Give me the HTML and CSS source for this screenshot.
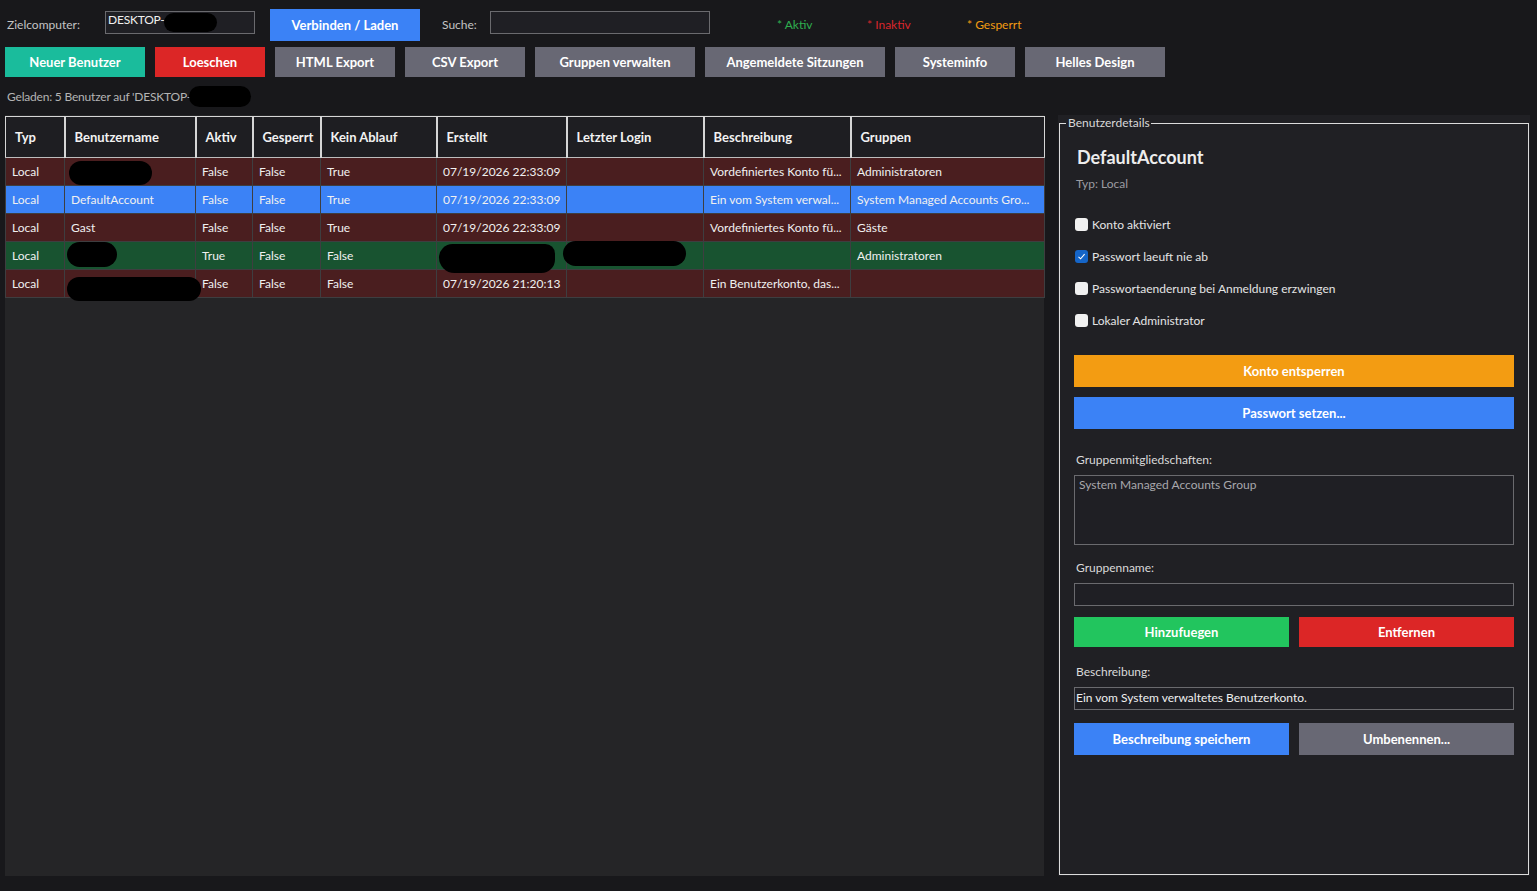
FILE: index.html
```html
<!DOCTYPE html>
<html lang="de">
<head>
<meta charset="utf-8">
<title>Benutzerverwaltung</title>
<link rel="stylesheet" href="styles.css">
</head>
<body>
<div class="topbar">
  <span class="lbl lbl-target">Zielcomputer:</span>
  <div class="textbox tb-target">DESKTOP-<span class="blob blob-target"></span></div>
  <button class="btn btn-blue btn-connect">Verbinden / Laden</button>
  <span class="lbl lbl-search">Suche:</span>
  <div class="textbox tb-search"></div>
  <span class="legend l-active">* Aktiv</span>
  <span class="legend l-inactive">* Inaktiv</span>
  <span class="legend l-locked">* Gesperrt</span>
</div>

<div class="toolbar">
  <button class="btn btn-teal w140">Neuer Benutzer</button>
  <button class="btn btn-red w110">Loeschen</button>
  <button class="btn btn-gray w120">HTML Export</button>
  <button class="btn btn-gray w120">CSV Export</button>
  <button class="btn btn-gray w160">Gruppen verwalten</button>
  <button class="btn btn-gray w180">Angemeldete Sitzungen</button>
  <button class="btn btn-gray w120">Systeminfo</button>
  <button class="btn btn-gray w140">Helles Design</button>
</div>

<div class="status">Geladen: 5 Benutzer auf 'DESKTOP-<span class="blob-inline"></span></div>

<div class="main">
  <div class="grid">
    <table class="users">
      <colgroup>
        <col class="c-typ"><col class="c-name"><col class="c-aktiv"><col class="c-gesp"><col class="c-ablauf"><col class="c-erst"><col class="c-login"><col class="c-beschr"><col class="c-grp">
      </colgroup>
      <thead>
        <tr><th>Typ</th><th>Benutzername</th><th>Aktiv</th><th>Gesperrt</th><th>Kein Ablauf</th><th>Erstellt</th><th>Letzter Login</th><th>Beschreibung</th><th>Gruppen</th></tr>
      </thead>
      <tbody>
        <tr class="r-inactive">
          <td>Local</td><td class="rel"><span class="blob b1"></span></td><td>False</td><td>False</td><td>True</td><td>07/19/2026 22:33:09</td><td></td><td>Vordefiniertes Konto fü...</td><td>Administratoren</td>
        </tr>
        <tr class="r-selected">
          <td>Local</td><td>DefaultAccount</td><td>False</td><td>False</td><td>True</td><td>07/19/2026 22:33:09</td><td></td><td>Ein vom System verwal...</td><td>System Managed Accounts Gro...</td>
        </tr>
        <tr class="r-inactive">
          <td>Local</td><td>Gast</td><td>False</td><td>False</td><td>True</td><td>07/19/2026 22:33:09</td><td></td><td>Vordefiniertes Konto fü...</td><td>Gäste</td>
        </tr>
        <tr class="r-active">
          <td>Local</td><td class="rel"><span class="blob b2"></span></td><td>True</td><td>False</td><td>False</td><td class="rel"><span class="blob b3"></span></td><td class="rel"><span class="blob b4"></span></td><td></td><td>Administratoren</td>
        </tr>
        <tr class="r-inactive">
          <td>Local</td><td class="rel"><span class="blob b5"></span></td><td>False</td><td>False</td><td>False</td><td>07/19/2026 21:20:13</td><td></td><td>Ein Benutzerkonto, das...</td><td></td>
        </tr>
      </tbody>
    </table>
  </div>

  <div class="panel">
    <fieldset class="details">
      <legend>Benutzerdetails</legend>
      <div class="d-title">DefaultAccount</div>
      <div class="d-type">Typ: Local</div>

      <div class="checks">
        <label class="chk"><span class="box"></span>Konto aktiviert</label>
        <label class="chk"><span class="box checked"><svg width="9" height="9" viewBox="0 0 9 9"><path d="M1.5 4.8 L3.6 6.8 L7.6 2.2" fill="none" stroke="#fff" stroke-width="1.1"/></svg></span>Passwort laeuft nie ab</label>
        <label class="chk"><span class="box"></span>Passwortaenderung bei Anmeldung erzwingen</label>
        <label class="chk"><span class="box"></span>Lokaler Administrator</label>
      </div>

      <button class="btn btn-orange full tall unlock">Konto entsperren</button>
      <button class="btn btn-blue full tall pwd">Passwort setzen...</button>

      <div class="flabel fl-groups">Gruppenmitgliedschaften:</div>
      <div class="listbox">System Managed Accounts Group</div>

      <div class="flabel fl-gname">Gruppenname:</div>
      <div class="textbox wide"></div>

      <div class="pair pair-groups">
        <button class="btn btn-green">Hinzufuegen</button>
        <button class="btn btn-red">Entfernen</button>
      </div>

      <div class="flabel fl-desc">Beschreibung:</div>
      <div class="textbox wide desc">Ein vom System verwaltetes Benutzerkonto.</div>

      <div class="pair pair-desc">
        <button class="btn btn-blue">Beschreibung speichern</button>
        <button class="btn btn-gray">Umbenennen...</button>
      </div>
    </fieldset>
  </div>
</div>
</body>
</html>
```

FILE: styles.css
```css
* { box-sizing: border-box; }

html, body {
  margin: 0;
  padding: 0;
  background: #18181b;
  color: #e6e6e6;
  font-family: Lato, "Noto Sans", sans-serif;
  font-size: 12px;
}

body {
  width: 1537px;
  height: 891px;
  overflow: hidden;
}

/* ---------- buttons ---------- */
.btn {
  border: 0;
  margin: 0;
  padding: 0;
  color: #ffffff;
  font-family: Lato, "Noto Sans", sans-serif;
  font-size: 13px;
  font-weight: 700;
  height: 30px;
  cursor: pointer;
}

.btn-blue { background: #3b82f6; }
.btn-teal { background: #1abc9c; }
.btn-red { background: #dc2626; }
.btn-gray { background: #686874; }
.btn-orange { background: #f39c12; }
.btn-green { background: #22c55e; }

/* ---------- top bar ---------- */
.topbar {
  display: flex;
  align-items: center;
  height: 32px;
  margin-top: 9px;
  padding-left: 7px;
}

.lbl {
  color: #c4c4c4;
  line-height: 16px;
}

.lbl-target { width: 98px; }

.textbox {
  background: #1f1f24;
  border: 1px solid #6a6a6e;
  height: 23px;
  color: #f0f0f0;
  line-height: 16px;
  padding: 0 2px;
}

.tb-target {
  position: relative;
  width: 150px;
  align-self: flex-start;
  margin-top: 2px;
  padding-top: 0;
  letter-spacing: -0.2px;
}

.blob-target {
  position: absolute;
  left: 58px;
  top: 1px;
  width: 53px;
  height: 19px;
  background: #000;
  border-radius: 10px;
}

.topbar .btn-connect {
  width: 150px;
  height: 32px;
  margin-left: 15px;
}

.lbl-search {
  margin-left: 22px;
  width: 48px;
}

.tb-search {
  width: 220px;
  align-self: flex-start;
  margin-top: 2px;
}

.legend { line-height: 16px; }
.l-active { color: #2fae4f; margin-left: 67px; width: 90px; }
.l-inactive { color: #d7262b; width: 100px; }
.l-locked { color: #f39c12; }

.toolbar {
  display: flex;
  gap: 10px;
  margin-top: 6px;
  padding-left: 5px;
}

.w110 { width: 110px; }
.w120 { width: 120px; }
.w140 { width: 140px; }
.w160 { width: 160px; }
.w180 { width: 180px; }

/* ---------- status ---------- */
.status {
  height: 38px;
  padding-left: 7px;
  display: flex;
  align-items: center;
  color: #b4b4b4;
  letter-spacing: -0.2px;
}

.blob-inline {
  display: inline-block;
  width: 62px;
  height: 21px;
  background: #000;
  border-radius: 11px;
  margin-left: -2px;
  margin-top: 1px;
}

/* ---------- main ---------- */
.main {
  display: flex;
  height: 761px;
}

.grid {
  width: 1039px;
  margin-left: 5px;
  background: #252527;
  padding-top: 1px;
}

.users {
  width: 1039px;
  table-layout: fixed;
  border-collapse: collapse;
}

.c-typ { width: 59px; }
.c-name { width: 131px; }
.c-aktiv { width: 57px; }
.c-gesp { width: 68px; }
.c-ablauf { width: 116px; }
.c-erst { width: 130px; }
.c-login { width: 137px; }
.c-beschr { width: 147px; }
.c-grp { width: 194px; }

.users th {
  height: 41px;
  background: #1e1e22;
  color: #f2f2f2;
  font-size: 13px;
  font-weight: 700;
  text-align: left;
  padding: 0 0 1px 9px;
  border-top: 1px solid #d6d6d6;
  border-bottom: 1px solid #bdbdbd;
  border-left: 2px solid #d6d6d6;
  white-space: nowrap;
}

.users th:first-child { border-left: 1px solid #d6d6d6; }
.users th:last-child { border-right: 1px solid #d6d6d6; }

.users td {
  height: 28px;
  padding: 0 0 1px 6px;
  border: 1px solid #3e3e40;
  color: #f0f0f0;
  white-space: nowrap;
  overflow: hidden;
}

.users td.rel {
  position: relative;
  overflow: visible;
}

.r-inactive td { background: #4a1e1f; }
.r-selected td { background: #3b82f6; }
.r-active td { background: #185330; }

.blob {
  position: absolute;
  background: #000;
  border-radius: 13px;
}

.b1 { left: 4px; top: 3px; width: 83px; height: 24px; }
.b2 { left: 2px; top: 0; width: 50px; height: 25px; }
.b3 { left: 2px; top: 2px; width: 116px; height: 29px; border-radius: 14px 10px 14px 16px; }
.b4 { left: -4px; top: -1px; width: 123px; height: 25px; }
.b5 { left: 2px; top: 7px; width: 134px; height: 24px; }

/* ---------- details panel ---------- */
.panel {
  width: 472px;
  margin-left: 14px;
  background: #202024;
  padding-left: 1px;
}

.details {
  margin: 0;
  width: 470px;
  height: 760px;
  border: 1px solid #dcdcdc;
  padding: 0 14px;
}

.details legend {
  margin-left: -8px;
  padding: 0 1px 0 2px;
  line-height: 16px;
  color: #d8d8d8;
}

.d-title {
  margin-top: 14px;
  padding-left: 3px;
  font-size: 18px;
  font-weight: 700;
  line-height: 24px;
  color: #ededed;
}

.d-type {
  margin-top: 7px;
  padding-left: 2px;
  line-height: 16px;
  color: #9c9ca2;
}

.checks {
  margin-top: 17px;
}

.chk {
  display: flex;
  align-items: center;
  height: 32px;
  color: #e4e4e4;
  padding-left: 1px;
  padding-bottom: 1px;
}

.box {
  width: 13px;
  height: 13px;
  border-radius: 3px;
  background: #f1f1f1;
  margin-right: 4px;
  display: flex;
  align-items: center;
  justify-content: center;
}

.box.checked { background: #1565c8; }

.full { width: 440px; display: block; }
.tall { height: 32px; }
.details .unlock { margin-top: 18px; }
.details .pwd { margin-top: 10px; }

.flabel {
  line-height: 16px;
  color: #dadada;
  padding-left: 2px;
}

.fl-groups { margin-top: 23px; }
.fl-gname { margin-top: 15px; }
.fl-desc { margin-top: 17px; }

.listbox {
  margin-top: 7px;
  height: 70px;
  border: 1px solid #6a6a6e;
  background: #1f1f24;
  color: #a8a8ac;
  padding: 1px 4px;
  line-height: 16px;
}

.wide {
  width: 440px;
  margin-top: 7px;
}

.desc {
  padding: 2px 1px;
}

.pair {
  display: flex;
  gap: 10px;
}

.pair .btn { width: 215px; }
.pair-groups { margin-top: 11px; }
.pair-desc { margin-top: 13px; }
.pair-desc .btn { height: 32px; }
```
